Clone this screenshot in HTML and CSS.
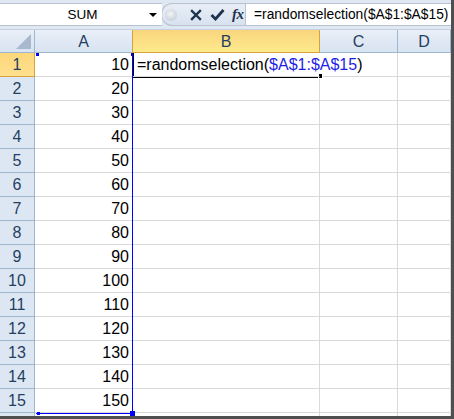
FILE: index.html
```html
<!DOCTYPE html>
<html>
<head>
<meta charset="utf-8">
<link rel="stylesheet" href="styles.css">
</head>
<body>
<div class="win">
  <div class="fbar">
    <div class="namebox"><span class="name">SUM</span><span class="dd"></span></div>
    <div class="tools">
      <span class="dot"></span>
      <svg class="ico-x" width="12" height="12" viewBox="0 0 12 12"><path d="M2 2 L10 10 M10 2 L2 10" stroke="#1d3350" stroke-width="2.4" stroke-linecap="square"/></svg>
      <svg class="ico-chk" width="15" height="13" viewBox="0 0 15 13"><path d="M1.5 7 L5.5 11 L13.5 2" fill="none" stroke="#1d3350" stroke-width="2.8"/></svg>
      <span class="fx">fx</span>
    </div>
    <div class="formula">=randomselection($A$1:$A$15)</div>
  </div>
  <div class="sheet">
    <div class="grid">
      <div class="c ch corner"><span class="tri"></span></div>
      <div class="c ch">A</div>
      <div class="c ch sel">B</div>
      <div class="c ch">C</div>
      <div class="c ch">D</div>

      <div class="c rh rsel">1</div><div class="c num">10</div><div class="c b1"><span>=randomselection(</span><span class="ref">$A$1:$A$15</span><span>)</span></div><div class="c c1"></div><div class="c"></div>
      <div class="c rh">2</div><div class="c num">20</div><div class="c"></div><div class="c"></div><div class="c"></div>
      <div class="c rh">3</div><div class="c num">30</div><div class="c"></div><div class="c"></div><div class="c"></div>
      <div class="c rh">4</div><div class="c num">40</div><div class="c"></div><div class="c"></div><div class="c"></div>
      <div class="c rh">5</div><div class="c num">50</div><div class="c"></div><div class="c"></div><div class="c"></div>
      <div class="c rh">6</div><div class="c num">60</div><div class="c"></div><div class="c"></div><div class="c"></div>
      <div class="c rh">7</div><div class="c num">70</div><div class="c"></div><div class="c"></div><div class="c"></div>
      <div class="c rh">8</div><div class="c num">80</div><div class="c"></div><div class="c"></div><div class="c"></div>
      <div class="c rh">9</div><div class="c num">90</div><div class="c"></div><div class="c"></div><div class="c"></div>
      <div class="c rh">10</div><div class="c num">100</div><div class="c"></div><div class="c"></div><div class="c"></div>
      <div class="c rh">11</div><div class="c num">110</div><div class="c"></div><div class="c"></div><div class="c"></div>
      <div class="c rh">12</div><div class="c num">120</div><div class="c"></div><div class="c"></div><div class="c"></div>
      <div class="c rh">13</div><div class="c num">130</div><div class="c"></div><div class="c"></div><div class="c"></div>
      <div class="c rh">14</div><div class="c num">140</div><div class="c"></div><div class="c"></div><div class="c"></div>
      <div class="c rh">15</div><div class="c num">150</div><div class="c"></div><div class="c"></div><div class="c"></div>
      <div class="c rh"></div><div class="c"></div><div class="c"></div><div class="c"></div><div class="c"></div>
    </div>
    <div class="range">
      <span class="sq sq-tl"></span><span class="sq sq-tr"></span><span class="sq sq-bl"></span><span class="sq sq-br"></span>
    </div>
    <div class="active"><span class="handle"></span></div>
  </div>
</div>
</body>
</html>
```
FILE: styles.css
```css
* { box-sizing: border-box; }
html, body { margin: 0; padding: 0; background: #fff; }
body { font-family: "Liberation Sans", Arial, sans-serif; }

.win {
  width: 454px;
  height: 419px;
  border-right: 3px solid #4f4f4f;
  border-bottom: 3px solid #4f4f4f;
  overflow: hidden;
  background: #fff;
}

/* formula bar */
.fbar {
  height: 30px;
  display: flex;
  align-items: stretch;
  padding: 3px 0 3px 0;
  background: #dfe7f2;
  border-bottom: 1px solid #c5d1e0;
}
.namebox {
  width: 162px;
  background: #fff;
  border-top: 1px solid #b8c3d1;
  border-bottom: 1px solid #b8c3d1;
  display: flex;
  align-items: center;
  position: relative;
}
.name {
  flex: 1;
  text-align: center;
  font-size: 13.5px;
  color: #000;
  padding-left: 16px;
}
.dd {
  width: 0; height: 0;
  border-left: 4px solid transparent;
  border-right: 4px solid transparent;
  border-top: 4px solid #000;
  margin-right: 5px;
  margin-top: 1px;
}
.tools {
  width: 84px;
  display: flex;
  align-items: center;
  background: linear-gradient(#e8eef6, #d8e2ef);
  border: 1px solid #b8c3d1;
  border-right: none;
  border-radius: 12px 0 0 12px;
  margin-left: -1px;
}
.dot {
  width: 12px; height: 12px;
  border-radius: 50%;
  background: radial-gradient(circle at 45% 40%, #f2f4f7 0%, #cdd3db 70%, #b9c0ca 100%);
  margin-left: 3px;
}
.ico-x { margin-left: 13px; }
.ico-chk { margin-left: 8px; }
.fx {
  margin-left: 7px;
  font-family: "Liberation Serif", "Times New Roman", serif;
  font-style: italic;
  font-weight: bold;
  font-size: 15px;
  color: #1d3350;
  letter-spacing: -0.5px;
}
.formula {
  flex: 1;
  background: #fff;
  border: 1px solid #b8c3d1;
  border-right: none;
  padding-left: 8px;
  font-size: 13.8px;
  line-height: 22px;
  color: #000;
  white-space: nowrap;
  overflow: hidden;
}

/* sheet */
.sheet {
  position: relative;
  height: 386px;
  overflow: hidden;
}
.grid {
  display: grid;
  grid-template-columns: 35px 98px 187px 78px 53px;
  grid-template-rows: 23px;
  grid-auto-rows: 24px;
}
.c {
  border-right: 1px solid #d9d9d9;
  border-bottom: 1px solid #d9d9d9;
  font-size: 16px;
  line-height: 24px;
  color: #000;
  white-space: nowrap;
}
.ch {
  background: linear-gradient(#eaf0f8 0%, #e1e9f4 40%, #d9e4f2 100%);
  border-right-color: #9eb6ce;
  border-bottom-color: #9eb6ce;
  text-align: center;
  color: #243f61;
  line-height: 23px;
}
.ch.sel {
  background: linear-gradient(#f8d57c 0%, #fcdf86 50%, #feea8c 100%);
  border-left: 1px solid #d5a23c;
  border-right-color: #d5a23c;
  border-bottom-color: #d5a23c;
  margin-left: -1px;
}
.corner { position: relative; }
.tri {
  position: absolute;
  right: 3px;
  bottom: 3px;
  width: 0; height: 0;
  border-left: 15px solid transparent;
  border-bottom: 15px solid #a9b8cc;
}
.rh {
  background: #dde7f3;
  border-right-color: #9eb6ce;
  border-bottom-color: #9eb6ce;
  text-align: center;
  color: #243f61;
}
.rh.rsel {
  background: linear-gradient(#fcd77a, #ffe08e);
  border-right-color: #d5a23c;
  border-bottom-color: #d5a23c;
}
.num { text-align: right; padding-right: 3px; }
.b1 {
  overflow: visible;
  border-right-color: transparent;
  padding-left: 4px;
  position: relative;
  z-index: 1;
}
.ref { color: #1e1ee6; }
.c1 { background: transparent; }

/* range highlight around A1:A15 */
.range {
  position: absolute;
  left: 36px;
  top: 23px;
  width: 97px;
  height: 361px;
  border-right: 1px solid #0000ff;
  border-bottom: 1px solid #0000ff;
  pointer-events: none;
}
.sq {
  position: absolute;
  background: #0000ff;
}
.sq-tl { left: 0; top: 0; width: 3px; height: 3px; }
.sq-tr { right: -2px; top: 0; width: 3px; height: 3px; }
.sq-bl { left: 1px; bottom: -2px; width: 3px; height: 3px; }
.sq-br { right: -3px; bottom: -3px; width: 5px; height: 5px; }

/* active cell B1 */
.active {
  position: absolute;
  left: 133px;
  top: 23px;
  width: 187px;
  height: 25px;
  border-left: 1px solid #000;
  border-bottom: 2px solid #000;
  pointer-events: none;
}
.handle {
  position: absolute;
  right: -3px;
  bottom: -3px;
  width: 5px;
  height: 5px;
  background: #000;
  border: 1px solid #fff;
  border-top: none;
}
```
